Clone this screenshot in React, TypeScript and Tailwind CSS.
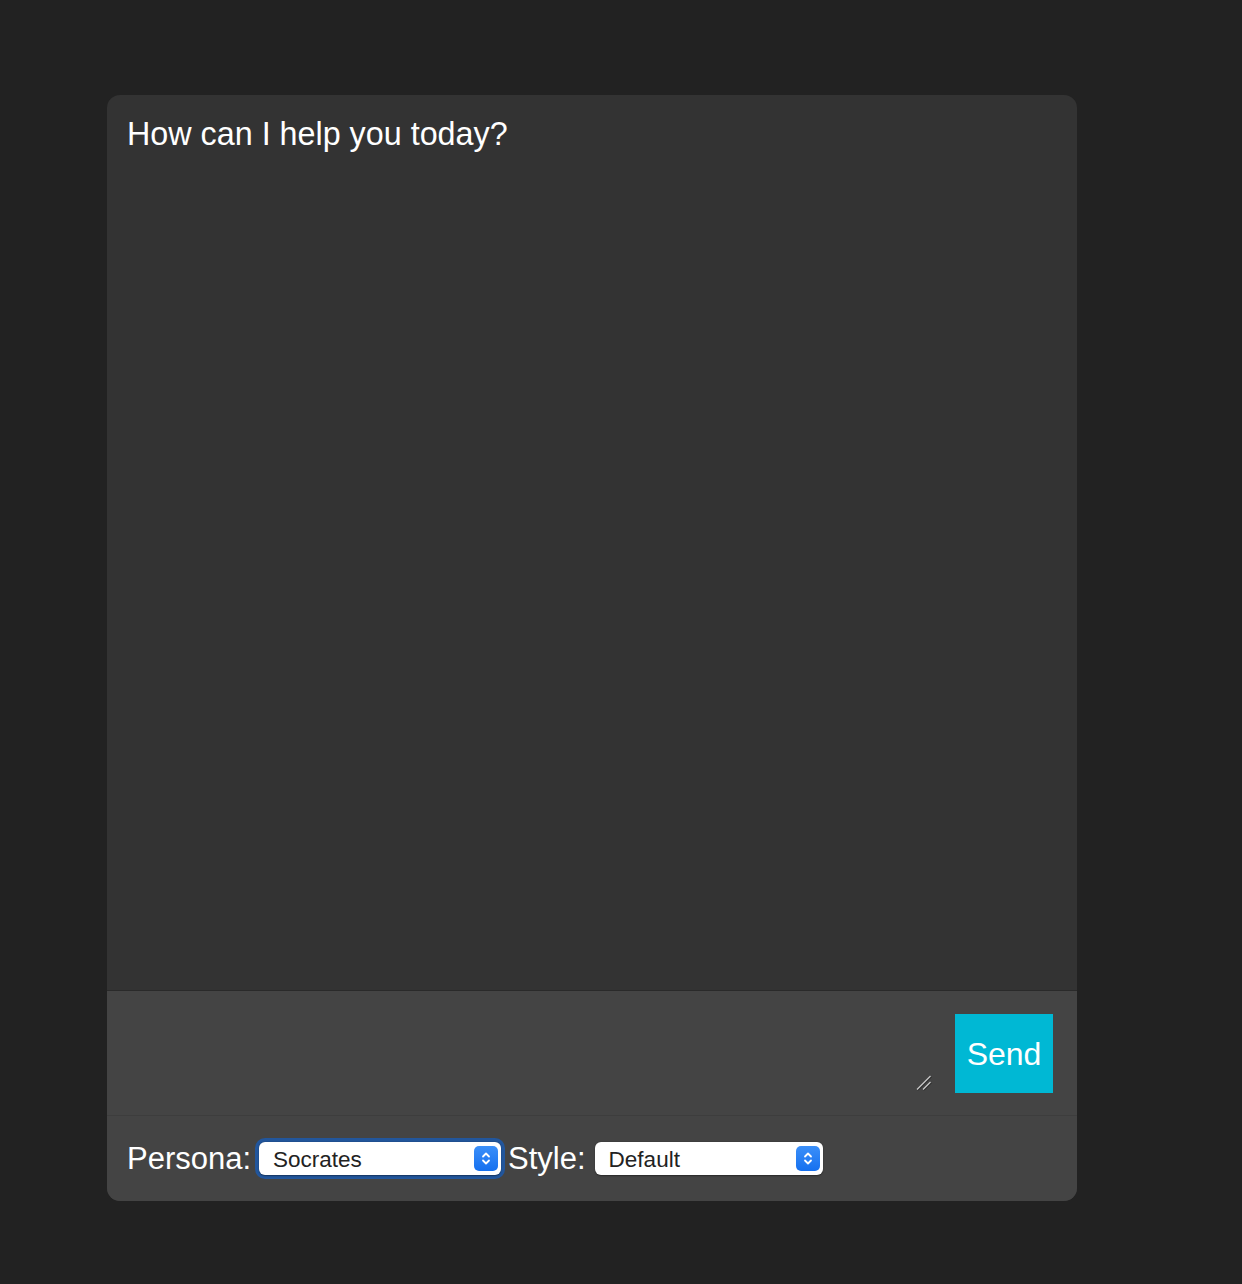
import React from "react";

function Chevrons() {
  return (
    <svg width="10" height="15" viewBox="0 0 10 15" fill="none">
      <path d="M2 5.5 L5 2.5 L8 5.5" stroke="white" strokeWidth="1.8" strokeLinecap="round" strokeLinejoin="round" />
      <path d="M2 9.5 L5 12.5 L8 9.5" stroke="white" strokeWidth="1.8" strokeLinecap="round" strokeLinejoin="round" />
    </svg>
  );
}

function FakeSelect({ value, width, focused }: { value: string; width: string; focused?: boolean }) {
  return (
    <div className={"rounded-[10px] p-[4px] " + (focused ? "bg-[#22569c]" : "bg-transparent")}>
      <div
        className={
          "relative flex h-[33px] items-center rounded-[6px] bg-white pl-[14px] shadow-[0_0.5px_1.5px_rgba(0,0,0,0.4)] " +
          width
        }
      >
        <span className="pt-[4px] text-[22.5px] leading-none text-[#222]">{value}</span>
        <div className="absolute right-[3px] top-[4px] flex h-[25px] w-[24px] items-center justify-center rounded-[5px] bg-gradient-to-b from-[#3a8ff9] to-[#1570ef]">
          <Chevrons />
        </div>
      </div>
    </div>
  );
}

export default function App() {
  return (
    <div
      className="min-h-[1284px] bg-[#222222] pl-[107px] pt-[95px]"
      style={{ fontFamily: '"Liberation Sans", Arial, Helvetica, sans-serif' }}
    >
      <div className="flex h-[1106px] w-[970px] flex-col overflow-hidden rounded-[13px] bg-[#333333]">
        <div className="h-[895px] px-[20px] pt-[21px]">
          <p className="text-[32.3px] leading-[37px] text-white">How can I help you today?</p>
        </div>
        <div className="flex h-[126px] gap-[22px] border-t border-t-[#2a2a2a] border-b border-b-[#3d3d3d] bg-[#444444] py-[23px] pl-[20px] pr-[24px]">
          <div className="relative flex-1">
            <textarea className="h-[80px] w-full resize-none border-0 bg-transparent text-[20px] text-white outline-none" />
            <svg className="absolute bottom-[1px] right-[1px]" width="17" height="17" viewBox="0 0 17 17" fill="none">
              <path d="M2 15.5 L15.5 2" stroke="#c8c8c8" strokeWidth="1.3" />
              <path d="M3 16.5 L16.5 3" stroke="#2a2a2a" strokeWidth="1" />
              <path d="M8 15.5 L15.5 8" stroke="#c8c8c8" strokeWidth="1.3" />
              <path d="M9 16.5 L16.5 9" stroke="#2a2a2a" strokeWidth="1" />
            </svg>
          </div>
          <button className="h-[79px] w-[98px] bg-[#00b8d4] text-[32px] text-white">Send</button>
        </div>
        <div className="flex flex-1 items-center bg-[#444444] pl-[20px]">
          <span className="text-[31px] leading-none text-white">Persona:</span>
          <div className="ml-[4px]">
            <FakeSelect value="Socrates" width="w-[242px]" focused />
          </div>
          <span className="ml-[3px] text-[31px] leading-none text-white">Style:</span>
          <div className="ml-[5px]">
            <FakeSelect value="Default" width="w-[228px]" />
          </div>
        </div>
      </div>
    </div>
  );
}
